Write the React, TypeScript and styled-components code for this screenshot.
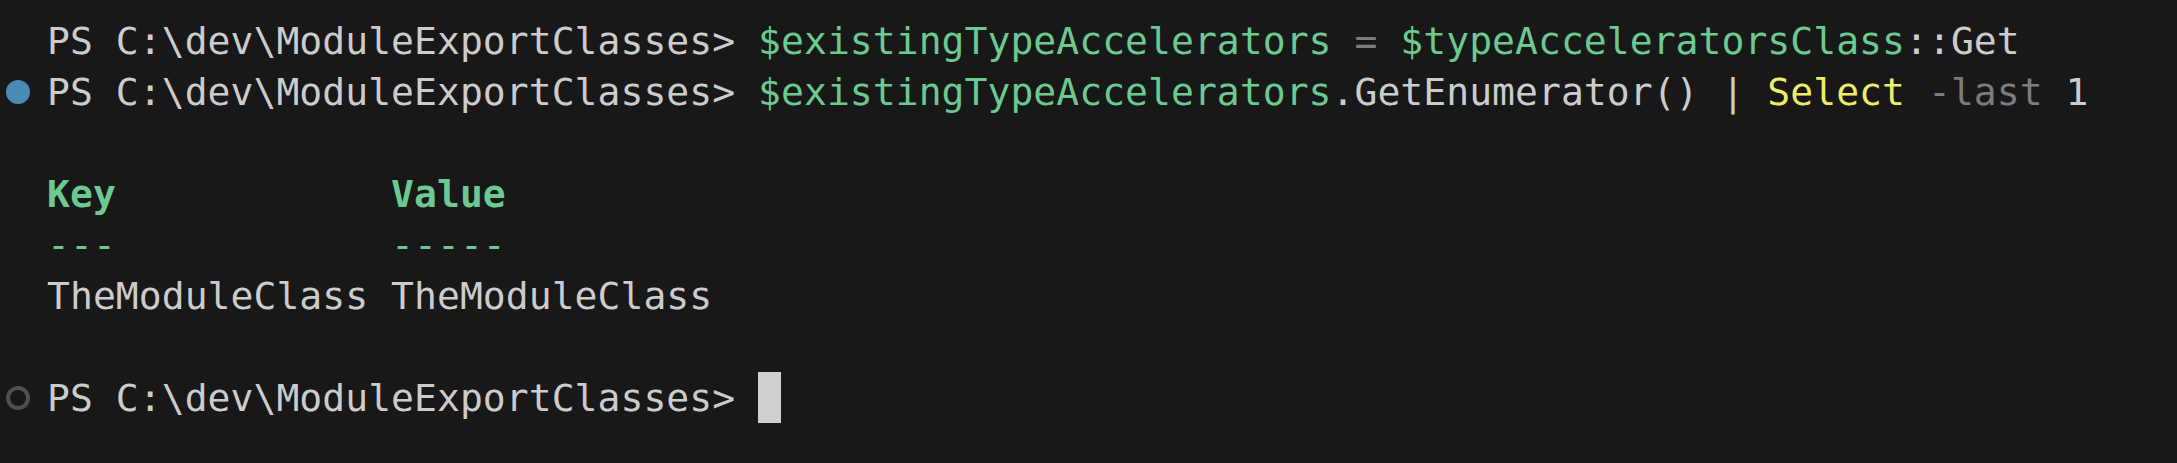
import React from "react";
import styled, { createGlobalStyle } from "styled-components";

const Global = createGlobalStyle`
  html, body { margin: 0; padding: 0; background: #181818; }
  #root { width: 2177px; height: 463px; overflow: hidden; }
`;

const Terminal = styled.div`
  width: 2177px;
  height: 463px;
  box-sizing: border-box;
  background: #181818;
  padding-top: 15px;
  display: flex;
  flex-direction: column;
  font-family: "DejaVu Sans Mono", "Liberation Mono", monospace;
  font-size: 38px;
  letter-spacing: 0.06px;
  color: #cccccc;
`;

const Line = styled.div`
  display: flex;
  align-items: center;
  height: 51px;
  white-space: pre;
`;

const Gutter = styled.div`
  width: 47px;
  flex: none;
  display: flex;
  align-items: center;
  padding-left: 6px;
  box-sizing: border-box;
`;

const Decoration = styled.span<{ $kind: "success" | "pending" }>`
  display: block;
  width: 24px;
  height: 24px;
  border-radius: 50%;
  box-sizing: border-box;
  ${(p) =>
    p.$kind === "success"
      ? "background: #4a8bb5;"
      : "border: 4px solid #4f4f4f; background: transparent;"}
`;

const Tok = styled.span<{ $c?: "green" | "yellow" | "gray" | "white"; $bold?: boolean }>`
  color: ${(p) =>
    p.$c === "green"
      ? "#6cc991"
      : p.$c === "yellow"
      ? "#eded6a"
      : p.$c === "gray"
      ? "#7c7c7c"
      : "#cccccc"};
  font-weight: ${(p) => (p.$bold ? 700 : 400)};
`;

const Cursor = styled.span`
  display: inline-block;
  width: 23px;
  height: 51px;
  background: #cfcfcf;
`;

const Text = styled.div`
  display: flex;
  align-items: center;
`;

const PROMPT = "PS C:\\dev\\ModuleExportClasses> ";

export default function App() {
  return (
    <>
      <Global />
      <Terminal>
        <Line>
          <Gutter />
          <Text>
            <Tok>{PROMPT}</Tok>
            <Tok $c="green">$existingTypeAccelerators</Tok>
            <Tok $c="gray"> = </Tok>
            <Tok $c="green">$typeAcceleratorsClass</Tok>
            <Tok>::Get</Tok>
          </Text>
        </Line>
        <Line>
          <Gutter>
            <Decoration $kind="success" />
          </Gutter>
          <Text>
            <Tok>{PROMPT}</Tok>
            <Tok $c="green">$existingTypeAccelerators</Tok>
            <Tok>.GetEnumerator() | </Tok>
            <Tok $c="yellow">Select</Tok>
            <Tok $c="gray"> -last</Tok>
            <Tok> 1</Tok>
          </Text>
        </Line>
        <Line />
        <Line>
          <Gutter />
          <Text>
            <Tok $c="green" $bold>{"Key            Value"}</Tok>
          </Text>
        </Line>
        <Line>
          <Gutter />
          <Text>
            <Tok $c="green">{"---            -----"}</Tok>
          </Text>
        </Line>
        <Line>
          <Gutter />
          <Text>
            <Tok>TheModuleClass TheModuleClass</Tok>
          </Text>
        </Line>
        <Line />
        <Line>
          <Gutter>
            <Decoration $kind="pending" />
          </Gutter>
          <Text>
            <Tok>{PROMPT}</Tok>
            <Cursor />
          </Text>
        </Line>
      </Terminal>
    </>
  );
}
